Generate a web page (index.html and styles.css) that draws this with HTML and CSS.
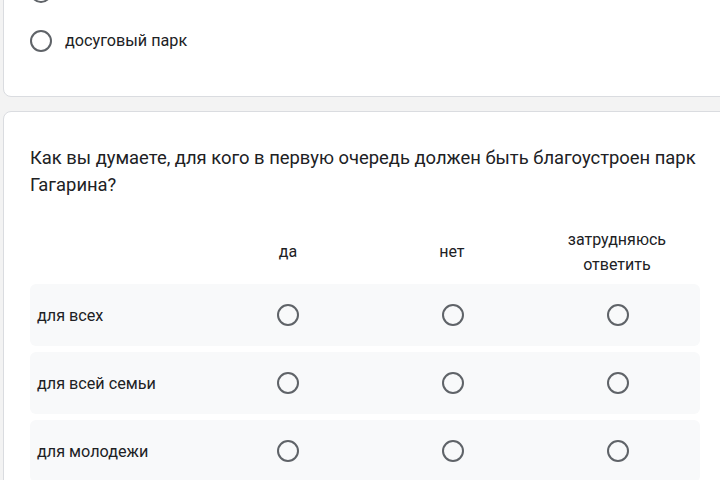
FILE: index.html
```html
<!DOCTYPE html>
<html lang="ru">
<head>
<meta charset="utf-8">
<link rel="stylesheet" href="styles.css">
</head>
<body>
<div class="page">
  <div class="card card-top">
    <div class="option"><span class="radio"></span><span class="opt-label">другое назначение</span></div>
    <div class="option"><span class="radio"></span><span class="opt-label">досуговый парк</span></div>
  </div>
  <div class="card card-grid">
    <div class="question">Как вы думаете, для кого в первую очередь должен быть благоустроен парк Гагарина?</div>
    <div class="grid">
      <div class="head">
        <div></div>
        <div class="col-title">да</div>
        <div class="col-title">нет</div>
        <div class="col-title">затрудняюсь ответить</div>
      </div>
      <div class="row">
        <div class="row-label">для всех</div>
        <div class="cell"><span class="radio"></span></div>
        <div class="cell"><span class="radio"></span></div>
        <div class="cell"><span class="radio"></span></div>
      </div>
      <div class="row">
        <div class="row-label">для всей семьи</div>
        <div class="cell"><span class="radio"></span></div>
        <div class="cell"><span class="radio"></span></div>
        <div class="cell"><span class="radio"></span></div>
      </div>
      <div class="row">
        <div class="row-label">для молодежи</div>
        <div class="cell"><span class="radio"></span></div>
        <div class="cell"><span class="radio"></span></div>
        <div class="cell"><span class="radio"></span></div>
      </div>
    </div>
  </div>
</div>
</body>
</html>
```

FILE: styles.css
```css
html, body {
  margin: 0;
  padding: 0;
  background: #f3f3f3;
  overflow: hidden;
  width: 720px;
  height: 480px;
}
body {
  font-family: Roboto, "Noto Sans", Arial, sans-serif;
  color: #202124;
}
.page {
  margin-left: 3px;
  width: 740px;
  display: flex;
  flex-direction: column;
  gap: 14px;
  margin-top: -34px;
}
.card {
  background: #fff;
  border: 1px solid #dadce0;
  border-radius: 8px;
}
.card-top {
  padding: 0 0 31px 26px;
}
.option {
  display: flex;
  align-items: center;
  height: 49px;
}
.opt-label {
  font-size: 16.2px;
  margin-left: 13px;
}
.radio {
  display: inline-block;
  box-sizing: border-box;
  width: 22px;
  height: 22px;
  border: 2px solid #5f6368;
  border-radius: 50%;
  flex: none;
}
.card-grid {
  padding: 32px 0 40px 26px;
}
.question {
  font-size: 18.4px;
  line-height: 27px;
  width: 690px;
}
.grid {
  margin-top: 25px;
  width: 670px;
  display: flex;
  flex-direction: column;
  gap: 6px;
}
.head, .row {
  display: grid;
  grid-template-columns: 176px repeat(3, 1fr);
  align-items: center;
}
.head {
  height: 57px;
  margin-bottom: -2px;
}
.col-title {
  text-align: center;
  font-size: 16px;
  line-height: 25px;
  padding: 0 34px;
}
.row {
  height: 62px;
  background: #f8f9fa;
  border-radius: 6px;
}
.row-label {
  font-size: 16.2px;
  padding-left: 7px;
}
.cell {
  display: flex;
  justify-content: center;
}
```
